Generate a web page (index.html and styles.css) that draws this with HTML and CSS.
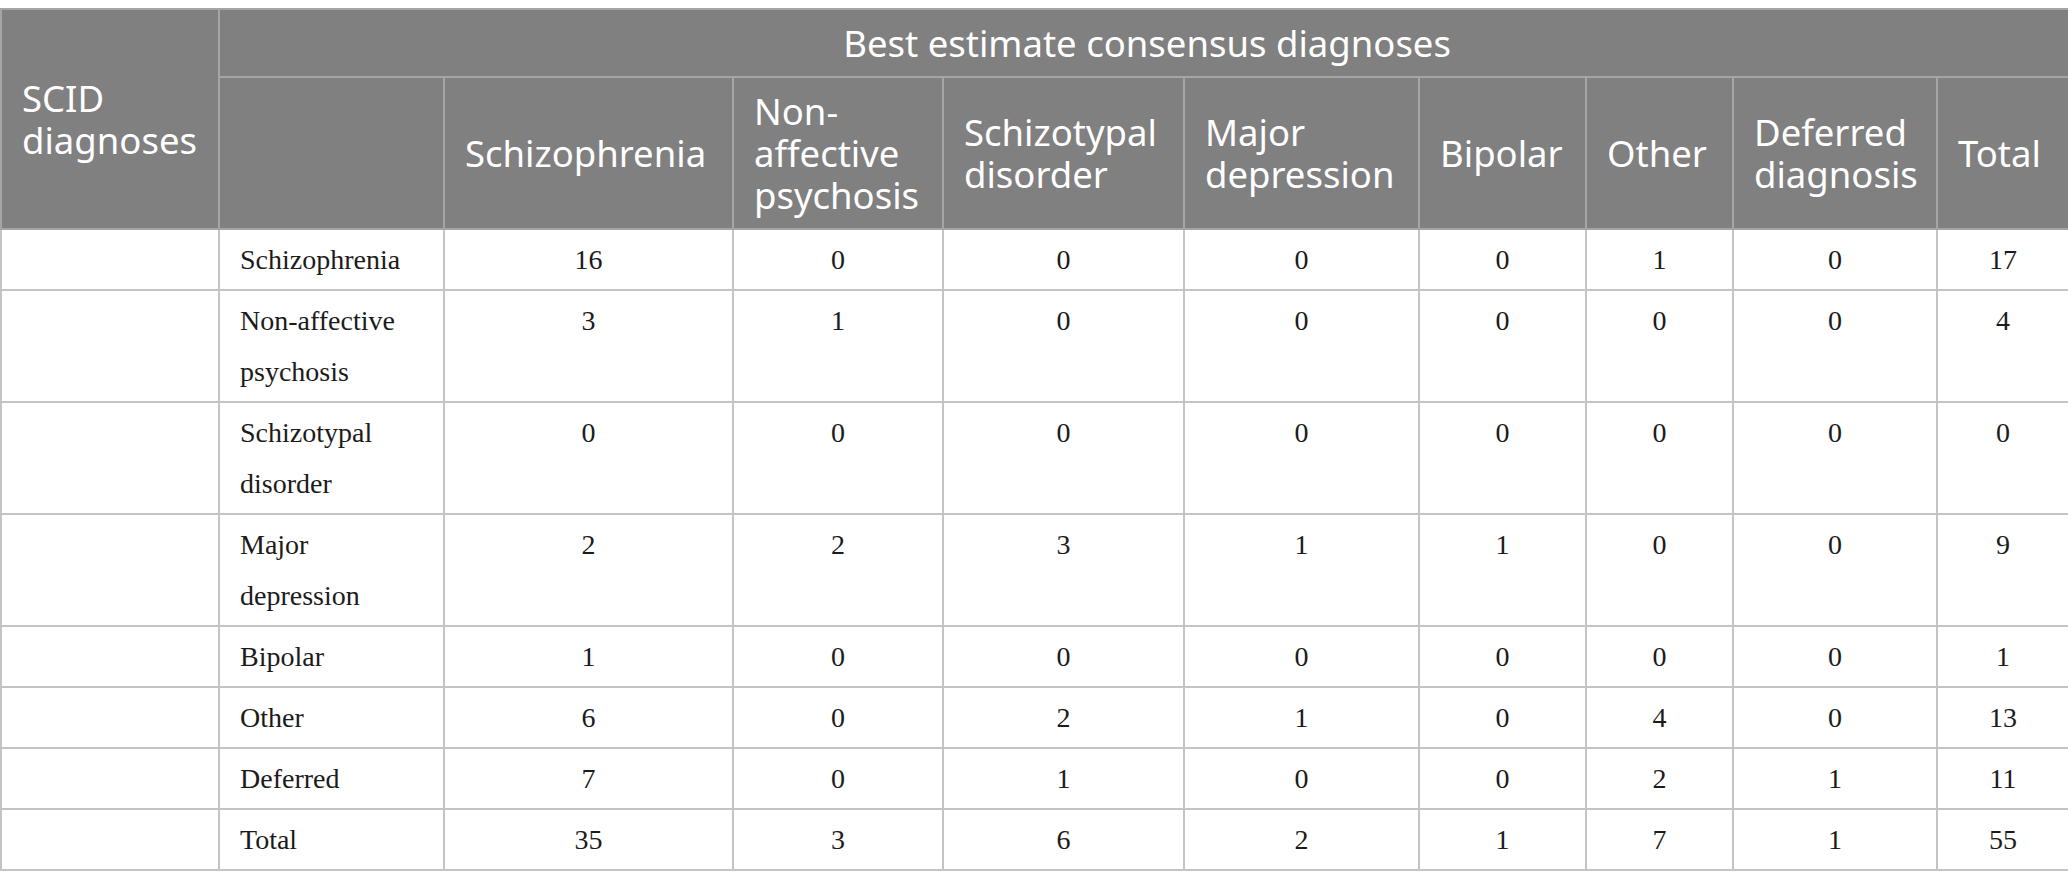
FILE: index.html
```html
<!DOCTYPE html>
<html lang="en">
<head>
  <meta charset="UTF-8">
  <title>SCID vs best estimate consensus diagnoses</title>
  <link rel="stylesheet" href="styles.css">
</head>
<body>
  <table class="diag-table">
    <colgroup>
      <col class="c-scid">
      <col class="c-label">
      <col class="c-schiz">
      <col class="c-nonaff">
      <col class="c-typal">
      <col class="c-major">
      <col class="c-bipolar">
      <col class="c-other">
      <col class="c-deferred">
      <col class="c-total">
    </colgroup>
    <thead>
      <tr class="head-top">
        <th rowspan="2" class="scid-head">SCID diagnoses</th>
        <th colspan="9" class="group-head">Best estimate consensus diagnoses</th>
      </tr>
      <tr class="head-cols">
        <th></th>
        <th>Schizophrenia</th>
        <th>Non-affective psychosis</th>
        <th>Schizotypal disorder</th>
        <th>Major depression</th>
        <th>Bipolar</th>
        <th>Other</th>
        <th>Deferred diagnosis</th>
        <th>Total</th>
      </tr>
    </thead>
    <tbody>
      <tr>
        <td></td><td class="label">Schizophrenia</td>
        <td>16</td><td>0</td><td>0</td><td>0</td><td>0</td><td>1</td><td>0</td><td>17</td>
      </tr>
      <tr>
        <td></td><td class="label">Non-affective psychosis</td>
        <td>3</td><td>1</td><td>0</td><td>0</td><td>0</td><td>0</td><td>0</td><td>4</td>
      </tr>
      <tr>
        <td></td><td class="label">Schizotypal disorder</td>
        <td>0</td><td>0</td><td>0</td><td>0</td><td>0</td><td>0</td><td>0</td><td>0</td>
      </tr>
      <tr>
        <td></td><td class="label">Major depression</td>
        <td>2</td><td>2</td><td>3</td><td>1</td><td>1</td><td>0</td><td>0</td><td>9</td>
      </tr>
      <tr>
        <td></td><td class="label">Bipolar</td>
        <td>1</td><td>0</td><td>0</td><td>0</td><td>0</td><td>0</td><td>0</td><td>1</td>
      </tr>
      <tr>
        <td></td><td class="label">Other</td>
        <td>6</td><td>0</td><td>2</td><td>1</td><td>0</td><td>4</td><td>0</td><td>13</td>
      </tr>
      <tr>
        <td></td><td class="label">Deferred</td>
        <td>7</td><td>0</td><td>1</td><td>0</td><td>0</td><td>2</td><td>1</td><td>11</td>
      </tr>
      <tr>
        <td></td><td class="label">Total</td>
        <td>35</td><td>3</td><td>6</td><td>2</td><td>1</td><td>7</td><td>1</td><td>55</td>
      </tr>
    </tbody>
  </table>
</body>
</html>
```

FILE: styles.css
```css
* {
  box-sizing: border-box;
}

body {
  margin: 0;
  padding-top: 8px;
  background: #ffffff;
}

.diag-table {
  width: 2068px;
  table-layout: fixed;
  border-collapse: collapse;
  border: 2px solid #c4c4c4;
}

/* column widths */
.c-scid { width: 218px; }
.c-label { width: 225px; }
.c-schiz { width: 289px; }
.c-nonaff { width: 210px; }
.c-typal { width: 241px; }
.c-major { width: 235px; }
.c-bipolar { width: 167px; }
.c-other { width: 147px; }
.c-deferred { width: 204px; }
.c-total { width: 132px; }

/* header */
.diag-table th {
  background: #7f807f;
  color: #ffffff;
  font-family: "Noto Sans", "Open Sans", sans-serif;
  font-weight: 400;
  font-size: 36.5px;
  line-height: 42px;
  text-align: left;
  vertical-align: middle;
  padding: 0 14px 0 20px;
  border: 2px solid #a4a5a4;
}

.head-top {
  height: 68px;
}

.head-top .group-head {
  text-align: center;
}

.head-cols {
  height: 152px;
}

/* body */
.diag-table td {
  font-family: "Liberation Serif", "Times New Roman", serif;
  font-size: 28px;
  line-height: 51px;
  color: #1b1b1b;
  text-align: center;
  vertical-align: top;
  padding: 4px 10px;
  border: 2px solid #c4c4c4;
}

.diag-table td.label {
  text-align: left;
  padding-left: 20px;
}
```
